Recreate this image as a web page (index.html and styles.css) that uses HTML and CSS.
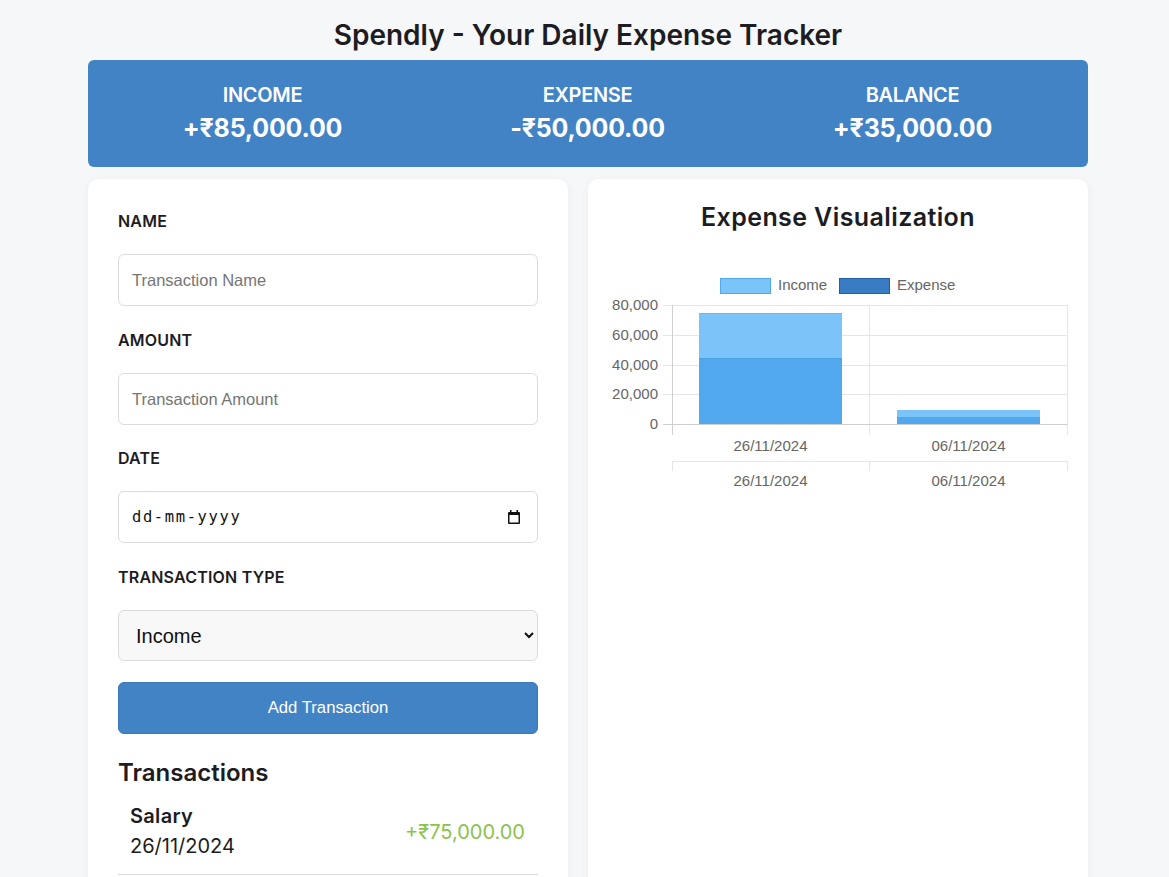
FILE: index.html
```html
<!DOCTYPE html>
<html lang="en">
<head>
<meta charset="utf-8">
<title>Spendly</title>
<link rel="stylesheet" href="styles.css">
</head>
<body>
<div class="page">
  <h1 class="title">Spendly - Your Daily Expense Tracker</h1>
  <section class="summary">
    <div class="stat"><div class="stat-label">INCOME</div><div class="stat-value">+₹85,000.00</div></div>
    <div class="stat"><div class="stat-label">EXPENSE</div><div class="stat-value">-₹50,000.00</div></div>
    <div class="stat"><div class="stat-label">BALANCE</div><div class="stat-value">+₹35,000.00</div></div>
  </section>
  <div class="columns">
    <section class="card form-card">
      <label class="field-label" for="name">NAME</label>
      <input class="field" id="name" type="text" placeholder="Transaction Name">
      <label class="field-label" for="amount">AMOUNT</label>
      <input class="field field-tight" id="amount" type="text" placeholder="Transaction Amount">
      <label class="field-label" for="date">DATE</label>
      <div class="date-wrap">
        <input class="field date" id="date" type="text" placeholder="dd-mm-yyyy">
        <svg class="cal-icon" width="12" height="14" viewBox="0 0 12 14" xmlns="http://www.w3.org/2000/svg">
          <path d="M2 0h1.5v2h5V0H10v2h1a1 1 0 0 1 1 1v10a1 1 0 0 1-1 1H1a1 1 0 0 1-1-1V3a1 1 0 0 1 1-1h1z M1.5 5v7.5h9V5z" fill="#111" fill-rule="evenodd"/>
        </svg>
      </div>
      <label class="field-label" for="type">TRANSACTION TYPE</label>
      <select class="field select" id="type">
        <option>Income</option>
        <option>Expense</option>
      </select>
      <button class="add-btn" type="button">Add Transaction</button>
      <h2 class="tx-title">Transactions</h2>
      <ul class="tx-list">
        <li class="tx">
          <div class="tx-info"><div class="tx-name">Salary</div><div class="tx-date">26/11/2024</div></div>
          <div class="tx-amount income">+₹75,000.00</div>
        </li>
      </ul>
    </section>
    <section class="card chart-card">
      <h2 class="chart-title">Expense Visualization</h2>
      <svg class="chart" viewBox="608 262 460 240" width="460" height="240" xmlns="http://www.w3.org/2000/svg">
        <g font-family="Liberation Sans, Arial, sans-serif" font-size="15" fill="#666">
          <rect x="720.5" y="278.5" width="50" height="15" fill="#7ac4f9" stroke="#52a8ec"/>
          <text x="778" y="290">Income</text>
          <rect x="839.5" y="278.5" width="50" height="15" fill="#3a7cc4" stroke="#1d5fa8"/>
          <text x="897" y="290">Expense</text>
        </g>
        <g stroke="#e6e6e6" stroke-width="1">
          <line x1="663" y1="305.5" x2="1067" y2="305.5"/>
          <line x1="663" y1="335.5" x2="1067" y2="335.5"/>
          <line x1="663" y1="365.5" x2="1067" y2="365.5"/>
          <line x1="663" y1="394.5" x2="1067" y2="394.5"/>
          <line x1="869.5" y1="305" x2="869.5" y2="435"/>
          <line x1="1067.5" y1="305" x2="1067.5" y2="435"/>
          <line x1="672" y1="461.5" x2="1067" y2="461.5"/>
          <line x1="672.5" y1="461" x2="672.5" y2="471"/>
          <line x1="869.5" y1="461" x2="869.5" y2="471"/>
          <line x1="1067.5" y1="461" x2="1067.5" y2="471"/>
        </g>
        <rect x="699" y="313" width="143" height="45" fill="#7ac4f9"/>
        <rect x="699" y="358" width="143" height="66" fill="#52a8ec"/>
        <line x1="699" y1="313.5" x2="842" y2="313.5" stroke="#6bbaf4"/>
        <line x1="699" y1="358.5" x2="842" y2="358.5" stroke="#4c9fe2"/>
        <rect x="897" y="410" width="143" height="7" fill="#7ac4f9"/>
        <rect x="897" y="417" width="143" height="7" fill="#52a8ec"/>
        <g stroke="#cfcfcf" stroke-width="1">
          <line x1="663" y1="424.5" x2="1067" y2="424.5"/>
          <line x1="672.5" y1="305" x2="672.5" y2="435"/>
        </g>
        <g font-family="Liberation Sans, Arial, sans-serif" font-size="15" fill="#666" text-anchor="end">
          <text x="658" y="310">80,000</text>
          <text x="658" y="340">60,000</text>
          <text x="658" y="370">40,000</text>
          <text x="658" y="399">20,000</text>
          <text x="658" y="429">0</text>
        </g>
        <g font-family="Liberation Sans, Arial, sans-serif" font-size="15" fill="#666" text-anchor="middle">
          <text x="770.5" y="451">26/11/2024</text>
          <text x="968.5" y="451">06/11/2024</text>
          <text x="770.5" y="486">26/11/2024</text>
          <text x="968.5" y="486">06/11/2024</text>
        </g>
      </svg>
    </section>
  </div>
</div>
</body>
</html>
```
FILE: styles.css
```css
* { box-sizing: border-box; }

body {
  margin: 0;
  background: #f6f7f9;
  font-family: "Inter", "Noto Sans", "DejaVu Sans", sans-serif;
  color: #1c1c22;
}

.page {
  width: 1000px;
  margin-left: 88px;
}

.title {
  margin: 0;
  padding-top: 15px;
  height: 60px;
  font-size: 28px;
  font-weight: 600;
  line-height: 40px;
  text-align: center;
}

.summary {
  display: grid;
  grid-template-columns: 1fr 1fr 1fr;
  background: #4283c5;
  border-radius: 6px;
  height: 107px;
  padding: 22px 13px 0 12px;
  color: #fff;
  text-align: center;
}

.stat-label {
  font-size: 20px;
  font-weight: 600;
  line-height: 26px;
  letter-spacing: -0.3px;
}

.stat-value {
  font-size: 25px;
  font-weight: 700;
  line-height: 40px;
  letter-spacing: -0.2px;
}

.columns {
  display: grid;
  grid-template-columns: 480px 500px;
  gap: 20px;
  margin-top: 12px;
}

.card {
  background: #fff;
  border-radius: 10px;
  box-shadow: 0 2px 10px rgba(0, 0, 0, 0.05);
}

.form-card {
  padding: 30px 30px 40px;
  display: flex;
  flex-direction: column;
}

.field-label {
  display: block;
  font-size: 16px;
  font-weight: 600;
  line-height: 24px;
  margin-bottom: 21px;
  letter-spacing: 0.2px;
}

.field {
  display: block;
  width: 100%;
  height: 52px;
  margin: 0 0 22px;
  padding: 0 13px;
  border: 1px solid #dcdcdc;
  border-radius: 6px;
  font-family: "Liberation Sans", Arial, sans-serif;
  font-size: 16.5px;
  color: #222;
  background: #fff;
}

.field-tight { margin-bottom: 21px; }

.field::placeholder { color: #757575; }

.date-wrap {
  position: relative;
}

.date {
  font-family: "DejaVu Sans Mono", "Liberation Mono", monospace;
  font-size: 15.5px;
  letter-spacing: 1.6px;
  padding-left: 13px;
}

.date::placeholder { color: #111; }

.cal-icon {
  position: absolute;
  right: 18px;
  top: 19px;
}

.select {
  height: 51px;
  margin-bottom: 21px;
  padding-left: 13px;
  font-size: 20px;
  background: #f8f8f8;
  color: #111;
}

.add-btn {
  width: 100%;
  height: 52px;
  border: 1px solid #3a78b8;
  border-radius: 6px;
  background: #4283c5;
  color: #fff;
  font-family: "Liberation Sans", Arial, sans-serif;
  font-size: 16.7px;
}

.tx-title {
  margin: 23px 0 0;
  font-size: 24px;
  font-weight: 600;
  line-height: 32px;
}

.tx-list {
  list-style: none;
  margin: 0;
  padding: 0;
}

.tx {
  display: flex;
  align-items: center;
  justify-content: space-between;
  padding: 13px 13px 13px 12px;
  border-bottom: 1px solid #dcdcdc;
}

.tx-name {
  font-size: 20px;
  font-weight: 600;
  line-height: 29px;
  letter-spacing: 0.3px;
}

.tx-date {
  font-size: 20px;
  font-weight: 400;
  line-height: 30px;
}

.tx-amount {
  font-size: 20px;
  font-weight: 400;
}

.tx-amount.income { color: #8bc34a; }

.chart-card {
  padding: 20px 20px;
  display: flex;
  flex-direction: column;
  align-items: center;
}

.chart-title {
  margin: 0;
  font-size: 25px;
  font-weight: 600;
  line-height: 36px;
  letter-spacing: 0.4px;
}

.chart {
  display: block;
  margin-top: 27px;
}
```
